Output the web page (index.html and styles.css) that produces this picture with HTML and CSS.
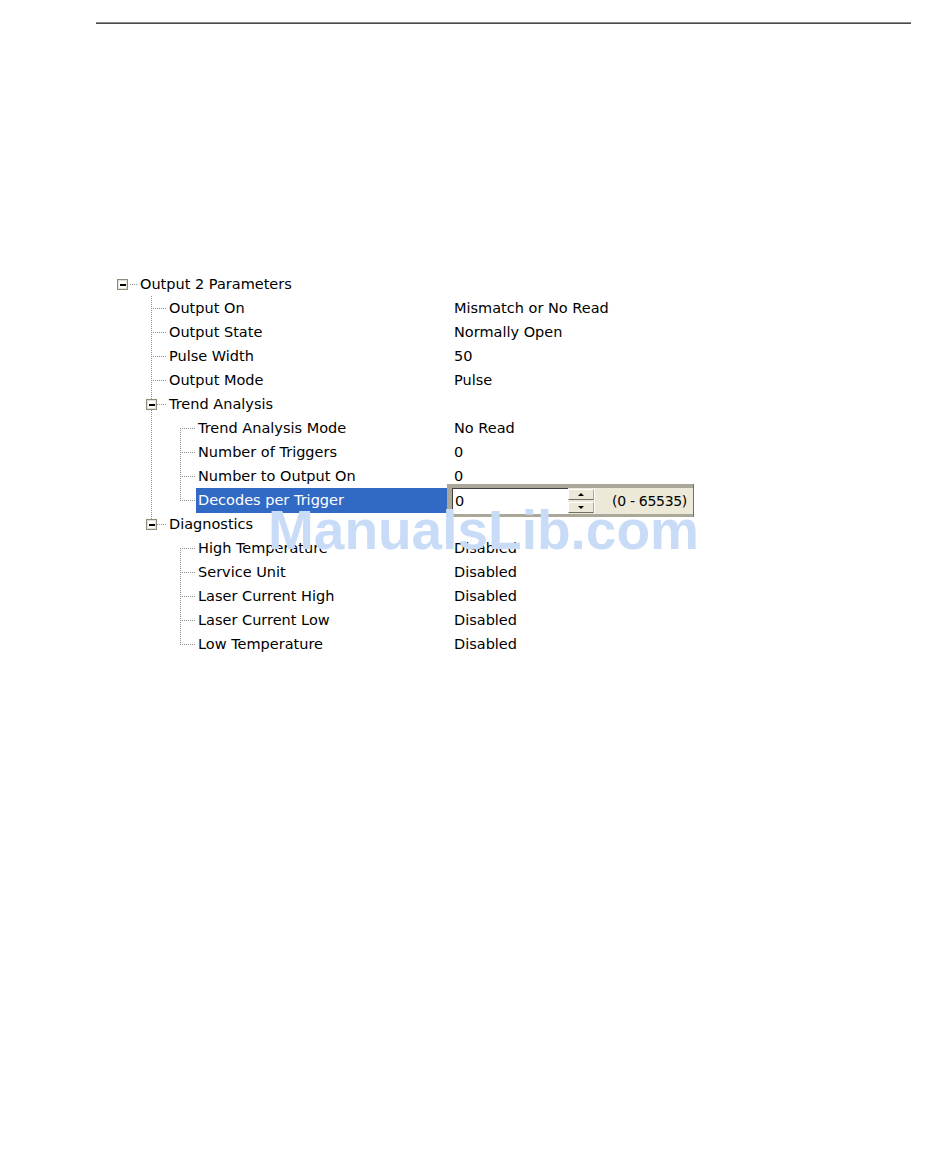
FILE: index.html
```html
<!DOCTYPE html>
<html lang="en">
<head>
  <meta charset="UTF-8">
  <title>Output 2 Parameters</title>
  <link rel="stylesheet" href="styles.css">
</head>
<body>
  <div class="rule"></div>

  <div class="tree">
    <div class="row">
      <div class="node"><span class="g root"><span class="exp"></span></span><span class="label">Output 2 Parameters</span></div>
      <div class="value"></div>
    </div>
    <div class="row">
      <div class="node"><span class="g"></span><span class="g t"></span><span class="label">Output On</span></div>
      <div class="value">Mismatch or No Read</div>
    </div>
    <div class="row">
      <div class="node"><span class="g"></span><span class="g t"></span><span class="label">Output State</span></div>
      <div class="value">Normally Open</div>
    </div>
    <div class="row">
      <div class="node"><span class="g"></span><span class="g t"></span><span class="label">Pulse Width</span></div>
      <div class="value">50</div>
    </div>
    <div class="row">
      <div class="node"><span class="g"></span><span class="g t"></span><span class="label">Output Mode</span></div>
      <div class="value">Pulse</div>
    </div>
    <div class="row">
      <div class="node"><span class="g"></span><span class="g t"><span class="exp"></span></span><span class="label">Trend Analysis</span></div>
      <div class="value"></div>
    </div>
    <div class="row">
      <div class="node"><span class="g"></span><span class="g v"></span><span class="g f"></span><span class="label">Trend Analysis Mode</span></div>
      <div class="value">No Read</div>
    </div>
    <div class="row">
      <div class="node"><span class="g"></span><span class="g v"></span><span class="g t"></span><span class="label">Number of Triggers</span></div>
      <div class="value">0</div>
    </div>
    <div class="row">
      <div class="node"><span class="g"></span><span class="g v"></span><span class="g t"></span><span class="label">Number to Output On</span></div>
      <div class="value">0</div>
    </div>
    <div class="row">
      <div class="node"><span class="g"></span><span class="g v"></span><span class="g l"></span><span class="label sel">Decodes per Trigger</span></div>
      <div class="value edit-cell">
        <div class="editor">
          <div class="edit-box">0</div>
          <div class="spin">
            <span class="spin-btn up"></span>
            <span class="spin-btn down"></span>
          </div>
          <div class="range">(0 - 65535)</div>
        </div>
      </div>
    </div>
    <div class="row">
      <div class="node"><span class="g"></span><span class="g l"><span class="exp"></span></span><span class="label">Diagnostics</span></div>
      <div class="value"></div>
    </div>
    <div class="row">
      <div class="node"><span class="g"></span><span class="g"></span><span class="g f"></span><span class="label">High Temperature</span></div>
      <div class="value">Disabled</div>
    </div>
    <div class="row">
      <div class="node"><span class="g"></span><span class="g"></span><span class="g t"></span><span class="label">Service Unit</span></div>
      <div class="value">Disabled</div>
    </div>
    <div class="row">
      <div class="node"><span class="g"></span><span class="g"></span><span class="g t"></span><span class="label">Laser Current High</span></div>
      <div class="value">Disabled</div>
    </div>
    <div class="row">
      <div class="node"><span class="g"></span><span class="g"></span><span class="g t"></span><span class="label">Laser Current Low</span></div>
      <div class="value">Disabled</div>
    </div>
    <div class="row">
      <div class="node"><span class="g"></span><span class="g"></span><span class="g l"></span><span class="label">Low Temperature</span></div>
      <div class="value">Disabled</div>
    </div>

    <div class="watermark">ManualsLib.com</div>
  </div>
</body>
</html>
```

FILE: styles.css
```css
body {
  margin: 0;
  background: #fff;
  font-family: "DejaVu Sans", Verdana, sans-serif;
  font-size: 14.5px;
  color: #000;
}

.rule {
  margin: 22px 0 0 96px;
  width: 815px;
  border-top: 1px solid #8a8a8a;
  border-bottom: 1px solid #4a4a4a;
}

/* tree */
.tree {
  position: relative;
  margin: 248px 0 0 108px;
  width: 600px;
}
.row {
  display: grid;
  grid-template-columns: 346px auto;
  height: 24px;
}
.node {
  display: flex;
}
.label, .value {
  line-height: 25px;
  white-space: nowrap;
}
.label {
  padding-left: 3px;
}
.label.sel {
  flex: 1;
  margin: 0 7px 0 1px;
  padding-left: 2px;
  background: #316ac5;
  color: #fff;
}

/* dotted connectors */
.g {
  flex: none;
  width: 29px;
  height: 24px;
  display: flex;
  align-items: flex-start;
  background-repeat: no-repeat;
}
.g.v {
  background-image: repeating-linear-gradient(to bottom, #8f8f8f 0 1px, transparent 1px 2px);
  background-position: 14px 0;
  background-size: 1px 24px;
}
.g.t {
  background-image:
    repeating-linear-gradient(to bottom, #8f8f8f 0 1px, transparent 1px 2px),
    repeating-linear-gradient(to right, #8f8f8f 0 1px, transparent 1px 2px);
  background-position: 14px 0, 16px 12px;
  background-size: 1px 24px, 13px 1px;
}
.g.l {
  background-image:
    repeating-linear-gradient(to bottom, #8f8f8f 0 1px, transparent 1px 2px),
    repeating-linear-gradient(to right, #8f8f8f 0 1px, transparent 1px 2px);
  background-position: 14px 0, 16px 12px;
  background-size: 1px 13px, 13px 1px;
}
.g.f {
  background-image:
    repeating-linear-gradient(to bottom, #8f8f8f 0 1px, transparent 1px 2px),
    repeating-linear-gradient(to right, #8f8f8f 0 1px, transparent 1px 2px);
  background-position: 14px 12px, 16px 12px;
  background-size: 1px 12px, 13px 1px;
}
.g.root {
  background-image: repeating-linear-gradient(to right, #8f8f8f 0 1px, transparent 1px 2px);
  background-position: 22px 12px;
  background-size: 7px 1px;
}

.exp {
  width: 9px;
  height: 9px;
  margin: 7px 0 0 9px;
  border: 1px solid #8e8b7d;
  box-shadow: inset 0 0 0 1px #e4e2d8;
  background: #fff;
  display: flex;
  align-items: center;
  justify-content: center;
}
.exp::before {
  content: "";
  width: 6px;
  height: 2px;
  background: #000;
}

/* in-place editor */
.edit-cell {
  position: relative;
}
.editor {
  position: absolute;
  left: -7px;
  top: -4px;
  width: 247px;
  height: 33px;
  box-sizing: border-box;
  display: flex;
  padding: 4px 0 3px 5px;
  background: #aca899;
  border-right: 1px solid #716f64;
}
.edit-box {
  width: 113px;
  padding-left: 2px;
  background: #fff;
  border-top: 1px solid #404040;
  border-left: 1px solid #404040;
  line-height: 25px;
}
.spin {
  width: 26px;
  display: flex;
  flex-direction: column;
  gap: 2px;
  padding: 1px 0;
  background: #ece9d8;
}
.spin-btn {
  flex: 1;
  display: flex;
  align-items: center;
  justify-content: center;
  background: #ece9d8;
  border-top: 1px solid #fff;
  border-left: 1px solid #fff;
  border-right: 1px solid #aca899;
  border-bottom: 1px solid #716f64;
}
.spin-btn::after {
  content: "";
  border-left: 3px solid transparent;
  border-right: 3px solid transparent;
}
.spin-btn.up::after {
  border-bottom: 3px solid #000;
}
.spin-btn.down::after {
  border-top: 3px solid #000;
}
.range {
  flex: 1;
  padding-left: 17px;
  background: #ece9d8;
  border-left: 1px solid #fff;
  font-size: 14px;
  letter-spacing: -0.3px;
  line-height: 26px;
  white-space: nowrap;
}

.watermark {
  position: absolute;
  left: 160px;
  top: 231px;
  font-family: "Liberation Sans", Arial, sans-serif;
  font-weight: bold;
  font-size: 55px;
  line-height: 1;
  color: #c8dcf7;
  white-space: nowrap;
}
```
